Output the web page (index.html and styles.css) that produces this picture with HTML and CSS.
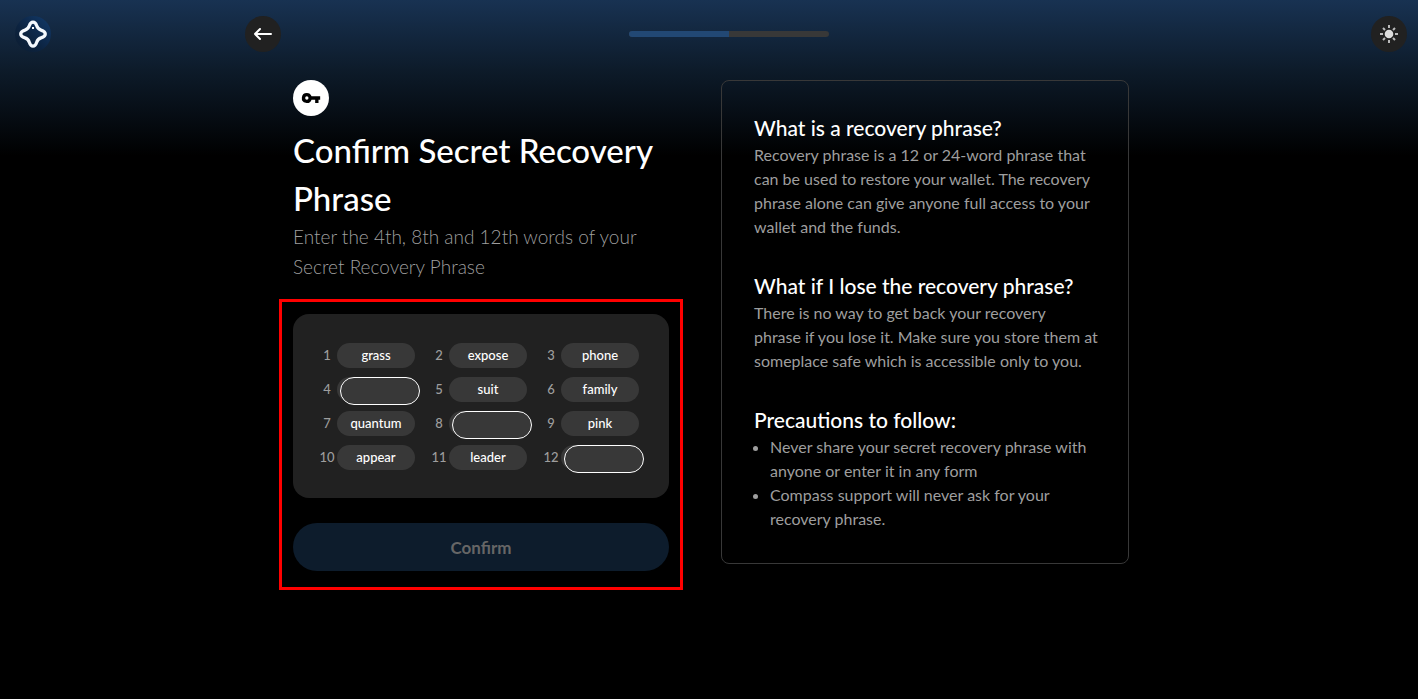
FILE: index.html
```html
<!DOCTYPE html>
<html lang="en">
<head>
<meta charset="utf-8">
<meta name="viewport" content="width=device-width, initial-scale=1">
<title>Confirm Secret Recovery Phrase</title>
<link rel="stylesheet" href="styles.css">
</head>
<body>
<header class="topbar">
  <a class="logo" href="#" aria-label="Compass home">
    <svg width="36" height="36" viewBox="0 0 36 36">
      <defs><linearGradient id="disc" x1="1" y1="0" x2="0" y2="1"><stop offset="0" stop-color="#123a6b"/><stop offset=".6" stop-color="#0c2340"/><stop offset="1" stop-color="#0d1d30"/></linearGradient></defs>
      <circle cx="18" cy="18" r="18" fill="url(#disc)"/>
      <path d="M18 6.200c2.200 0 3 1.500 3.600 3.400.7 2.200 2 3.800 4.400 4.500 2.400.7 4.300 1.600 4.300 3.900s-1.900 3.200-4.300 3.900c-2.400.7-3.700 2.300-4.400 4.500-.6 1.900-1.400 3.700-3.600 3.700s-3-1.800-3.600-3.700c-.7-2.200-2-3.800-4.400-4.500-2.400-.7-4.300-1.600-4.300-3.900s1.900-3.200 4.300-3.900c2.400-.7 3.700-2.300 4.400-4.500.6-1.900 1.400-3.400 3.600-3.400z" fill="none" stroke="#f4f8fd" stroke-width="3.200"/>
      <rect x="17" y="11" width="2" height="2" fill="#fff"/>
    </svg>
  </a>
  <div class="progress-row">
    <button class="round" type="button" aria-label="Back">
      <svg width="20" height="20" viewBox="0 0 20 20" fill="none" stroke="#fff" stroke-width="2" stroke-linecap="round" stroke-linejoin="round"><path d="M18 10H2M7 5L2 10l5 5"/></svg>
    </button>
    <div class="progress-area"><div class="progress" role="progressbar" aria-label="Setup progress" aria-valuenow="50" aria-valuemin="0" aria-valuemax="100"><div class="progress-fill" style="width:50%"></div></div></div>
  </div>
  <button class="round theme" type="button" aria-label="Toggle theme">
    <svg width="20" height="20" viewBox="0 0 20 20"><circle cx="10" cy="10" r="4.300" fill="#ddd"/><path d="M10 1v3M10 16v3M1 10h3M16 10h3M4 4l2 2M14 14l2 2M4 16l2-2M14 6l2-2" stroke="#bbb" stroke-width="2"/></svg>
  </button>
</header>
<main class="content">
  <section class="left">
    <div class="key">
      <svg width="20" height="20" viewBox="0 0 24 24"><path d="M12.650 10A6 6 0 0 0 7 6a6 6 0 1 0 5.650 8H17v4h4v-4h2v-4H12.650zM7 14a2 2 0 1 1 0-4 2 2 0 0 1 0 4z" fill="#000"/></svg>
    </div>
    <h1>Confirm Secret Recovery Phrase</h1>
    <p class="lead">Enter the 4th, 8th and 12th words of your Secret Recovery Phrase</p>
    <form class="marked">
      <ol class="words">
        <li><span class="num">1</span><span class="pill">grass</span></li>
        <li><span class="num">2</span><span class="pill">expose</span></li>
        <li><span class="num">3</span><span class="pill">phone</span></li>
        <li><label class="num" for="w4">4</label><span class="pill"><input id="w4" type="text"></span></li>
        <li><span class="num">5</span><span class="pill">suit</span></li>
        <li><span class="num">6</span><span class="pill">family</span></li>
        <li><span class="num">7</span><span class="pill">quantum</span></li>
        <li><label class="num" for="w8">8</label><span class="pill"><input id="w8" type="text"></span></li>
        <li><span class="num">9</span><span class="pill">pink</span></li>
        <li><span class="num">10</span><span class="pill">appear</span></li>
        <li><span class="num">11</span><span class="pill">leader</span></li>
        <li><label class="num" for="w12">12</label><span class="pill"><input id="w12" type="text"></span></li>
      </ol>
      <button class="confirm" type="submit" disabled>Confirm</button>
    </form>
  </section>
  <aside class="info">
    <section>
      <h2>What is a recovery phrase?</h2>
      <p>Recovery phrase is a 12 or 24-word phrase that can be used to restore your wallet. The recovery phrase alone can give anyone full access to your wallet and the funds.</p>
    </section>
    <section>
      <h2>What if I lose the recovery phrase?</h2>
      <p>There is no way to get back your recovery<br>phrase if you lose it. Make sure you store them at someplace safe which is accessible only to you.</p>
    </section>
    <section>
      <h2>Precautions to follow:</h2>
      <ul>
        <li>Never share your secret recovery phrase with anyone or enter it in any form</li>
        <li>Compass support will never ask for your recovery phrase.</li>
      </ul>
    </section>
  </aside>
</main>
</body>
</html>
```
FILE: styles.css
```css
* { box-sizing: border-box; }
body {
  margin: 0;
  min-height: 100vh;
  background: linear-gradient(#183252, #0d1b2a 70px, #000 156px) no-repeat #000;
  color: #fff;
  font-family: Lato, "Liberation Sans", sans-serif;
}
h1, h2, p, ul, ol { margin: 0; padding: 0; font-weight: 400; }
button, input { font: inherit; }
svg { display: block; }

.topbar {
  display: grid;
  grid-template-columns: 1fr minmax(0, 928px) 1fr;
  align-items: center;
  padding: 16px 11px 0;
}
.logo { width: 36px; margin-left: 4px; }
.progress-row { display: flex; align-items: center; gap: 4px; }
.progress-area { flex: 1; display: flex; justify-content: center; }
.progress { width: 200px; height: 6px; border-radius: 3px; background: #383838; overflow: hidden; }
.progress-fill { height: 100%; background: #224874; }
.round {
  display: grid;
  place-items: center;
  width: 36px;
  height: 36px;
  padding: 0;
  border: 0;
  border-radius: 50%;
  background: #212121;
}
.theme { justify-self: end; }

.content {
  display: grid;
  grid-template-columns: 376fr 408fr;
  gap: 52px;
  align-items: start;
  max-width: 928px;
  margin: 0 auto;
  padding: 28px 44px 28px 48px;
}
.key {
  display: grid;
  place-items: center;
  width: 36px;
  height: 36px;
  margin-bottom: 10px;
  border-radius: 50%;
  background: #fff;
}
h1 { font-size: 33px; line-height: 48px; font-weight: 500; }
.lead { font-size: 19px; line-height: 30px; font-weight: 300; color: #9e9e9e; }

.marked { margin: 17px -14px 0; padding: 12px 11px 16px; border: 3px solid #f00; }
.words {
  display: grid;
  grid-template-columns: repeat(3, 98px);
  gap: 9px 14px;
  padding: 29px 24px 28px;
  border-radius: 16px;
  background: #212121;
  list-style: none;
  font-size: 13px;
  line-height: 25px;
  font-weight: 500;
}
.words li { display: flex; text-align: center; }
.num { flex: 0 0 20px; color: #9e9e9e; }
.pill { position: relative; flex: 1; height: 25px; border-radius: 13px; background: #383838; }
.pill input {
  position: absolute;
  top: 0;
  left: 3px;
  width: 80px;
  height: 28px;
  padding: 0 12px;
  border: 1px solid #fff;
  border-radius: 14px;
  background: #383838;
  color: #fff;
}
.confirm {
  display: block;
  width: 100%;
  height: 48px;
  margin-top: 25px;
  border: 0;
  border-radius: 24px;
  background: #0d1c2c;
  color: #666;
  font-size: 17px;
  font-weight: 700;
}

.info {
  display: grid;
  gap: 32px;
  padding: 32px 24px 32px 32px;
  border: 1px solid #383838;
  border-radius: 8px;
  font-size: 16px;
  line-height: 24px;
  color: #9e9e9e;
}
.info h2 { font-size: 21px; line-height: 30px; font-weight: 500; color: #fff; }
.info ul { padding-left: 16px; }
```
